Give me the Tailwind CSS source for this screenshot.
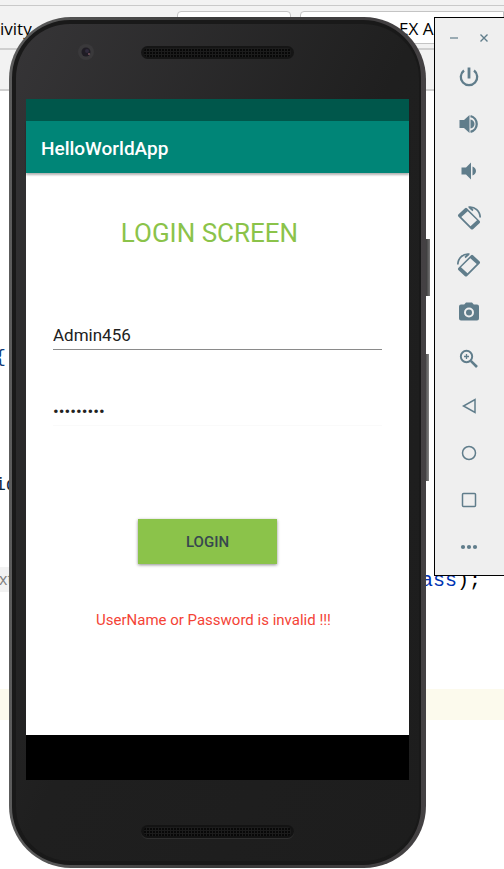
<!DOCTYPE html>
<html lang="en">
<head>
<meta charset="utf-8">
<meta name="viewport" content="width=device-width, initial-scale=1">
<title>HelloWorldApp</title>
<script src="https://cdn.jsdelivr.net/npm/@tailwindcss/browser@4"></script>
</head>
<body class="relative min-h-screen overflow-hidden bg-white font-['Roboto',sans-serif]">

<!-- Editor window behind the emulator -->
<div class="absolute inset-0 overflow-hidden bg-white font-['Liberation_Mono',monospace] text-lg">
  <div class="h-[6px] border-b border-[#c9c9c9] bg-[#f2f2f2]"></div>
  <div class="flex h-[44px] items-start border-b-2 border-[#cfcfcf] bg-[#f2f2f2] pt-[5px] font-['Open_Sans',sans-serif] text-[17px] text-black">
    <span class="w-[177px] pt-[6px] leading-6">ivity</span>
    <span class="h-[33px] w-[114px] rounded border border-[#c4c4c4] bg-white"></span>
    <span class="ml-[9px] h-[33px] flex-1 rounded-l border border-[#c4c4c4] bg-white pt-[5px] pl-[98px] leading-6 whitespace-nowrap">EX A</span>
  </div>
  <div class="h-[41px] border-b-2 border-[#cfcfcf] bg-[#f2f2f2]"></div>
  <div class="mt-[250px] -ml-[5px] h-8 leading-8 text-[#123a78]">{</div>
  <div class="mt-24 -ml-[5px] h-8 leading-8 text-[#0c2a44]">id</div>
  <div class="mt-[62px] flex h-[32px] items-center">
    <span class="w-[424px] bg-[#f2f2f2] font-['Open_Sans',sans-serif] text-base leading-[25px] text-[#808080]"><span class="-ml-px">xt</span></span>
    <span class="-ml-[3px] pt-[3px] text-xl leading-6 text-[#0033b3]">ass<span class="text-black">);</span></span>
  </div>
  <div class="mt-[94px] h-[31px] bg-[#fcfaed]"></div>
</div>

<main class="relative flex items-start pt-[17px] pl-[9px]">

  <!-- Phone -->
  <section class="relative min-w-0 flex-1 rounded-[62px] bg-linear-to-r from-[#5c5c5c] via-[#3a3a3a] to-[#444143] p-[3px] pr-[5px]" aria-label="Phone">
    <span class="absolute top-[222px] -right-[4px] h-[57px] w-[4px] bg-linear-to-r from-[#3a3a3a] to-[#777]"></span>
    <span class="absolute top-[337px] -right-[3px] h-[127px] w-[3px] bg-linear-to-r from-[#555] to-[#858585]"></span>
    <div class="rounded-[58px] border-4 border-r-2 border-[#191919] bg-linear-to-br from-[#363537] via-[#1f1f1f] to-[#1d1d1d]">
      <div class="grid h-[75px] grid-cols-[1fr_auto_1fr] items-start pt-[20px]">
        <span class="ml-[62px] flex size-4 items-center justify-center rounded-full bg-[#3a393b]">
          <svg class="size-[10px]" viewBox="0 0 10 10" aria-hidden="true"><circle cx="5" cy="5" r="4.5" fill="#1f1c24"/><circle cx="6" cy="4" r="2" fill="#302a3c"/><circle cx="8" cy="7" r="1" fill="#7a5560"/></svg>
        </span>
        <svg class="mt-[2px] h-[13px] w-[153px]" viewBox="0 0 153 13" aria-hidden="true">
          <defs><pattern id="mesh" width="3" height="3" patternUnits="userSpaceOnUse"><rect width="3" height="3" fill="#1c1c1c"/><rect width="2" height="2" fill="#080808"/></pattern></defs>
          <rect width="153" height="13" rx="6.500" fill="#151515"/><rect x="3" y="2" width="147" height="9" rx="4" fill="url(#mesh)"/>
        </svg>
        <span></span>
      </div>

      <div class="mx-[10px] bg-white">
        <div class="h-[22px] bg-[#00574b]"></div>
        <header class="flex h-[52px] items-center bg-[#008577] px-[15px] shadow-[0_2px_2px_rgba(0,0,0,0.3)]">
          <h1 class="pt-[4px] text-[19px] font-medium text-white">HelloWorldApp</h1>
        </header>
        <form class="flex h-[562px] flex-col items-center px-[27px]">
          <h2 class="mt-[42px] -ml-4 text-[26px] leading-9 text-[#8bc34a]">LOGIN SCREEN</h2>
          <input aria-label="Username" type="text" value="Admin456" class="mt-[69px] h-[30px] w-full border-b border-[#8a8a8a] text-[17px] text-[#212121] outline-none">
          <input aria-label="Password" type="password" value="Admin4567" class="mt-[46px] h-[30px] w-full border-b border-[#fafafa] text-[17px] text-[#212121] outline-none">
          <button type="button" class="mt-[93px] -ml-5 h-[45px] w-[139px] bg-[#8bc34a] pt-px text-[15px] font-medium text-[#37474f] shadow-[0_1px_3px_rgba(0,0,0,0.45)]">LOGIN</button>
          <p class="mt-[44px] -ml-2 text-[15px] leading-6 text-[#f44336]" role="alert">UserName or Password is invalid !!!</p>
        </form>
        <div class="h-[45px] bg-black"></div>
      </div>

      <div class="flex h-[81px] justify-center pt-[45px]">
        <svg class="h-[14px] w-[153px]" viewBox="0 0 153 14" aria-hidden="true">
          <rect y="1" width="153" height="13" rx="6.500" fill="#303030"/><rect width="153" height="13" rx="6.500" fill="#131313"/><rect x="3" y="2" width="147" height="9" rx="4" fill="url(#mesh)"/>
        </svg>
      </div>
    </div>
  </section>

  <!-- Emulator controls -->
  <aside class="ml-2 w-[70px] shrink-0 border border-r-0 border-black bg-[#efefef] pr-[2px] pb-[5px] text-[#607d8b]" aria-label="Emulator controls">
    <div class="flex h-[35px] items-end justify-center gap-4 pb-[8px]">
      <button type="button" aria-label="Minimize"><svg class="block size-[14px]" viewBox="0 0 14 14"><path d="M3 7h8" stroke="currentColor" stroke-opacity=".6" stroke-width="2"/></svg></button>
      <button type="button" aria-label="Close"><svg class="block size-[14px]" viewBox="0 0 14 14"><path d="M3.500 3.500l7 7m0-7l-7 7" stroke="currentColor" stroke-width="1.400"/></svg></button>
    </div>
    <div class="flex flex-col items-center">
      <button type="button" aria-label="Power" class="flex h-[47px] items-center"><svg class="size-6" viewBox="0 0 24 24" fill="none" stroke="currentColor" stroke-width="2.300"><path d="M12 2.500v11" stroke-width="2.800"/><path d="M7 5.500a8.200 8.200 0 1 0 10 0"/></svg></button>
      <button type="button" aria-label="Volume up" class="flex h-[47px] items-center"><svg class="size-6" viewBox="0 0 24 24" fill="currentColor"><path d="M2.500 8v8H7l5.500 5V3L7 8z"/><path d="M17.500 12A5 5 0 0 0 13.500 7.500v9a5 5 0 0 0 4-4.500z"/><path d="M13.500 4.200a8 8 0 0 1 0 15.600" fill="none" stroke="currentColor" stroke-width="2.300"/></svg></button>
      <button type="button" aria-label="Volume down" class="flex h-[47px] items-center"><svg class="size-6" viewBox="0 0 24 24" fill="currentColor"><path d="M4.500 8.500v7H9l5 5v-17l-5 5zM19 12a5 5 0 0 0-3.500-4.500v9A5 5 0 0 0 19 12z"/></svg></button>
      <button type="button" aria-label="Rotate left" class="flex h-[47px] items-center"><svg class="size-6 overflow-visible" viewBox="0 0 24 24" fill="currentColor"><path fill-rule="evenodd" d="M8 2.200q1-.8 2 0L22.700 15q.8 1 0 2L16 23.200q-1 .8-2 0L1.300 10.500q-.8-1 0-2zM10.700 5.200L4.300 11 13.500 20.200 20 14.300z"/><path d="M11.500 1.200C18 .3 23 5 23.200 11.500M12 1l4 3.500" fill="none" stroke="currentColor" stroke-width="1.700"/></svg></button>
      <button type="button" aria-label="Rotate right" class="flex h-[47px] items-center"><svg class="size-6 -scale-x-100 overflow-visible" viewBox="0 0 24 24" fill="currentColor"><path fill-rule="evenodd" d="M8 2.200q1-.8 2 0L22.700 15q.8 1 0 2L16 23.200q-1 .8-2 0L1.300 10.500q-.8-1 0-2zM10.700 5.200L4.300 11 13.500 20.200 20 14.300z"/><path d="M11.500 1.200C18 .3 23 5 23.200 11.500M12 1l4 3.500" fill="none" stroke="currentColor" stroke-width="1.700"/></svg></button>
      <button type="button" aria-label="Take screenshot" class="flex h-[47px] items-center"><svg class="size-6" viewBox="0 0 24 24" fill="currentColor"><path fill-rule="evenodd" d="M9 2.500L7.200 4.500H4a2 2 0 0 0-2 2v12a2 2 0 0 0 2 2h16a2 2 0 0 0 2-2v-12a2 2 0 0 0-2-2h-3.200L15 2.500zM12 17.500a5 5 0 1 1 0-10 5 5 0 0 1 0 10z"/><circle cx="12" cy="12.500" r="3"/></svg></button>
      <button type="button" aria-label="Zoom" class="flex h-[47px] items-center"><svg class="size-6" viewBox="0 0 24 24" fill="none" stroke="currentColor"><circle cx="9.500" cy="9.500" r="5.700" stroke-width="1.900"/><path d="M13.800 13.800l6.200 6.200" stroke-width="2.600"/><path d="M9.500 7v5M7 9.500h5" stroke-width="1.300"/></svg></button>
      <button type="button" aria-label="Back" class="flex h-[47px] items-center"><svg class="size-6" viewBox="0 0 24 24" fill="none" stroke="currentColor" stroke-width="1.500"><path d="M18 5.500v13L6.500 12z"/></svg></button>
      <button type="button" aria-label="Home" class="flex h-[47px] items-center"><svg class="size-6" viewBox="0 0 24 24" fill="none" stroke="currentColor" stroke-width="1.500"><circle cx="12" cy="12" r="6.500"/></svg></button>
      <button type="button" aria-label="Overview" class="flex h-[47px] items-center"><svg class="size-6" viewBox="0 0 24 24" fill="none" stroke="currentColor" stroke-width="1.500"><rect x="5.500" y="5.500" width="13" height="13" rx="1"/></svg></button>
      <button type="button" aria-label="More" class="flex h-[47px] items-center"><svg class="size-6" viewBox="0 0 24 24" fill="currentColor"><circle cx="6" cy="12" r="2.100"/><circle cx="12" cy="12" r="2.100"/><circle cx="18" cy="12" r="2.100"/></svg></button>
    </div>
  </aside>
</main>
</body>
</html>
